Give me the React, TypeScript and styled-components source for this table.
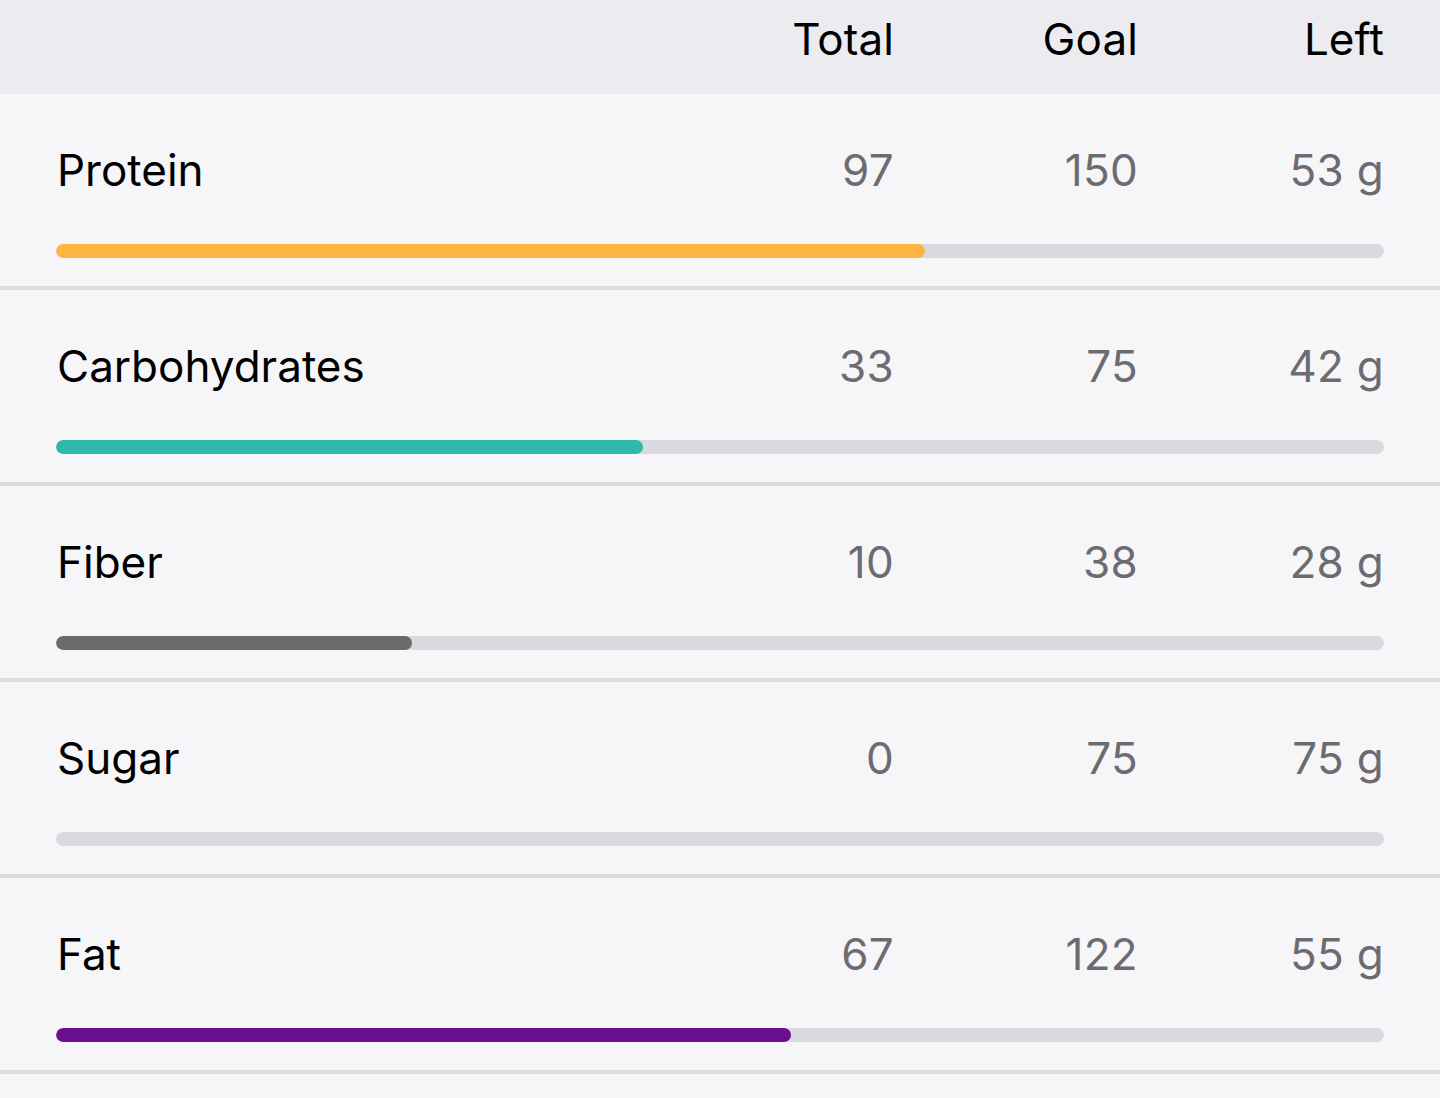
import React from "react";
import styled, { createGlobalStyle } from "styled-components";

const Global = createGlobalStyle`
  html, body { margin: 0; padding: 0; background: #f6f6f9; }
  body { font-family: Inter, "Noto Sans", sans-serif; -webkit-font-smoothing: antialiased; }
`;

const Page = styled.div`
  width: 1440px;
  background: #f6f6f9;
`;

const Grid = styled.div`
  display: grid;
  grid-template-columns: 1fr 245px 244px 246px;
  align-items: center;
`;

const Header = styled(Grid)`
  height: 94px;
  box-sizing: border-box;
  padding: 13px 56px 28px 56px;
  background: #ececf0;
  align-items: start;
`;

const HeadCell = styled.div`
  font-size: 44px;
  line-height: 53px;
  color: #000;
  text-align: right;
  letter-spacing: 0.1px;
`;

const Row = styled.div`
  box-sizing: border-box;
  height: 196px;
  padding: 50px 56px 28px 56px;
  border-bottom: 4px solid #dcdce0;
  display: flex;
  flex-direction: column;
  gap: 47px;
`;

const Label = styled.div`
  font-size: 44px;
  line-height: 53px;
  color: #000;
  letter-spacing: 0;
  padding-left: 1px;
`;

const Value = styled.div`
  font-size: 44px;
  line-height: 53px;
  color: #6c6c70;
  text-align: right;
  letter-spacing: 0.3px;
`;

const Track = styled.div`
  height: 14px;
  border-radius: 7px;
  background: #d9d9de;
  overflow: hidden;
`;

const Fill = styled.div<{ $color: string }>`
  height: 100%;
  border-radius: 7px;
  background: ${(p) => p.$color};
`;

const data = [
  { name: "Protein", total: 97, goal: 150, color: "#ffb340", fix: 10 },
  { name: "Carbohydrates", total: 33, goal: 75, color: "#2fb8ac", fix: 3 },
  { name: "Fiber", total: 10, goal: 38, color: "#6a6a6a", fix: 7 },
  { name: "Sugar", total: 0, goal: 75, color: "#ff9500", fix: 0 },
  { name: "Fat", total: 67, goal: 122, color: "#6b0f90", fix: 6 },
];

export default function App() {
  return (
    <Page>
      <Global />
      <Header>
        <div />
        <HeadCell>Total</HeadCell>
        <HeadCell>Goal</HeadCell>
        <HeadCell>Left</HeadCell>
      </Header>
      {data.map((d) => {
        const pct = (d.total / d.goal) * 100;
        return (
          <Row key={d.name}>
            <Grid>
              <Label>{d.name}</Label>
              <Value>{d.total}</Value>
              <Value>{d.goal}</Value>
              <Value>{d.goal - d.total} g</Value>
            </Grid>
            <Track>
              {d.total > 0 && (
                <Fill $color={d.color} style={{ width: `calc(${pct}% + ${d.fix}px)` }} />
              )}
            </Track>
          </Row>
        );
      })}
    </Page>
  );
}
